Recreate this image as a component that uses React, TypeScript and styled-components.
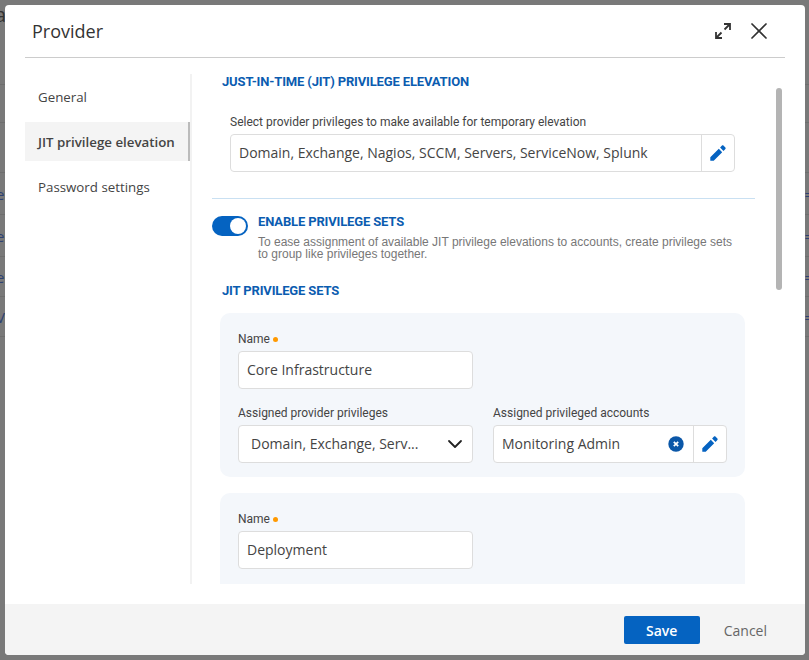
import React from 'react';
import styled, { createGlobalStyle } from 'styled-components';
import { ChevronDown, X } from 'lucide-react';

const GlobalStyle = createGlobalStyle`
	html, body {
		margin: 0;
		padding: 0;
	}
	body {
		width: 809px;
		height: 660px;
		overflow: hidden;
		background: #797979;
		font-family: 'Open Sans', sans-serif;
	}
`;

const PencilIcon = () => (
	<svg width="16" height="16" viewBox="0 0 16 16" fill="#0563c1">
		<path d="M0.3 12.3V15.7H3.7L12.2 7.2L8.8 3.8L0.3 12.3ZM15.4 4C15.8 3.6 15.8 3 15.4 2.6L13.4 0.6C13 0.2 12.4 0.2 12 0.6L10.1 2.5L13.5 5.9L15.4 4Z" />
	</svg>
);

const ExpandIcon = () => (
	<svg width="18" height="18" viewBox="0 0 18 18" fill="none" stroke="#333" strokeWidth="1.8">
		<path d="M10 2H16V8M16 2L10.5 7.5" />
		<path d="M2 10V16H8M2 16L7.5 10.5" />
	</svg>
);

const ClearIcon = () => (
	<svg width="16" height="16" viewBox="0 0 16 16">
		<circle cx="8" cy="8" r="7.7" fill="#0b57a8" />
		<path d="M5.8 5.8L10.2 10.2M10.2 5.8L5.8 10.2" stroke="#fff" strokeWidth="1.7" />
	</svg>
);

const navItems = [
	{ label: 'General', active: false },
	{ label: 'JIT privilege elevation', active: true },
	{ label: 'Password settings', active: false },
];

// the page behind the dialog, only its edges show
const pageRows = [
	{ height: 85, top: 0, left: '', right: '' },
	{ height: 38, top: 0, left: '', right: '' },
	{ height: 50, top: 20, left: '', right: ')' },
	{ height: 42, top: 0, left: 'e', right: '=' },
	{ height: 42, top: 0, left: 'e', right: '=' },
	{ height: 40, top: 0, left: 'e', right: '=' },
	{ height: 40, top: 0, left: 'V', right: '=' },
];

const App = () => {
	return (
		<>
			<GlobalStyle />
			<Backdrop>
				<PageCorner>a</PageCorner>
				{pageRows.map((row, index) => (
					<PageRow key={index} $height={row.height} $top={row.top}>
						<span>{row.left}</span>
						<span>{row.right}</span>
					</PageRow>
				))}
				<Modal>
					<Header>
						<Title>Provider</Title>
						<HeaderActions>
							<ExpandIcon />
							<X size={28} color="#333" strokeWidth={1.5} />
						</HeaderActions>
					</Header>
					<Body>
						<Nav>
							{navItems.map((item) => (
								<NavItem key={item.label} $active={item.active}>
									{item.label}
								</NavItem>
							))}
						</Nav>
						<Content>
							<SectionTitle>JUST-IN-TIME (JIT) PRIVILEGE ELEVATION</SectionTitle>
							<SelectBlock>
								<Label>Select provider privileges to make available for temporary elevation</Label>
								<InputGroup>
									<GroupText>Domain, Exchange, Nagios, SCCM, Servers, ServiceNow, Splunk</GroupText>
									<EditButton>
										<PencilIcon />
									</EditButton>
								</InputGroup>
							</SelectBlock>
							<Divider />
							<ToggleRow>
								<Toggle />
								<div>
									<ToggleTitle>ENABLE PRIVILEGE SETS</ToggleTitle>
									<ToggleHelp>
										To ease assignment of available JIT privilege elevations to accounts, create privilege sets
										to group like privileges together.
									</ToggleHelp>
								</div>
							</ToggleRow>
							<SetsTitle>JIT PRIVILEGE SETS</SetsTitle>
							<SetCard>
								<Label>
									Name<Required />
								</Label>
								<TextInput>Core Infrastructure</TextInput>
								<FieldRow>
									<div>
										<Label>Assigned provider privileges</Label>
										<SelectBox>
											<span>Domain, Exchange, Serv...</span>
											<ChevronDown size={24} color="#222" strokeWidth={1.8} />
										</SelectBox>
									</div>
									<div>
										<Label>Assigned privileged accounts</Label>
										<InputGroup>
											<GroupText>Monitoring Admin</GroupText>
											<ClearSlot>
												<ClearIcon />
											</ClearSlot>
											<EditButton>
												<PencilIcon />
											</EditButton>
										</InputGroup>
									</div>
								</FieldRow>
							</SetCard>
							<SetCard $cut>
								<Label>
									Name<Required />
								</Label>
								<TextInput>Deployment</TextInput>
							</SetCard>
							<ScrollThumb />
						</Content>
					</Body>
					<Footer>
						<SaveButton>Save</SaveButton>
						<CancelButton>Cancel</CancelButton>
					</Footer>
				</Modal>
			</Backdrop>
		</>
	);
};

export default App;

const Backdrop = styled.div`
	position: relative;
	width: 809px;
	height: 660px;
	overflow: hidden;
`;

const PageCorner = styled.div`
	position: absolute;
	top: 2px;
	left: -5px;
	font-size: 20px;
	line-height: 26px;
	color: #333;
`;

const PageRow = styled.div<{ $height: number; $top: number }>`
	height: ${(props) => props.$height}px;
	padding-top: ${(props) => props.$top}px;
	box-sizing: border-box;
	border-bottom: 1px solid #6e6e6e;
	display: flex;
	align-items: center;
	justify-content: space-between;
	margin: 0 -4px;
	font-size: 15px;
	color: #2e4172;
`;

const Modal = styled.div`
	position: absolute;
	top: 5px;
	left: 5px;
	width: 800px;
	height: 650px;
	background: #fff;
	border-radius: 4px;
	display: flex;
	flex-direction: column;
	overflow: hidden;
`;

const Header = styled.header`
	height: 52px;
	margin: 0 20px;
	border-bottom: 1px solid #ccc;
	display: flex;
	align-items: center;
	justify-content: space-between;
	flex-shrink: 0;
`;

const Title = styled.h1`
	margin: 0 0 0 7px;
	font-size: 18px;
	font-weight: 400;
	color: #333;
`;

const HeaderActions = styled.div`
	display: flex;
	align-items: center;
	gap: 13px;
	margin-right: 12px;
`;

const Body = styled.div`
	height: 546px;
	display: flex;
	padding: 0 0 0 20px;
	overflow: hidden;
	flex-shrink: 0;
`;

const Nav = styled.nav`
	width: 165px;
	height: 510px;
	margin-top: 16px;
	border-right: 2px solid #f2f2f2;
	flex-shrink: 0;
`;

const NavItem = styled.div<{ $active: boolean }>`
	height: 39px;
	margin-bottom: 6px;
	padding-left: 13px;
	display: flex;
	align-items: center;
	font-size: 13.3px;
	color: #444;
	font-weight: ${(props) => (props.$active ? 600 : 400)};
	background: ${(props) => (props.$active ? '#f4f4f4' : 'transparent')};
	border-right: ${(props) => (props.$active ? '2px solid #bbb' : '0')};
	&:first-child {
		margin-top: 3px;
	}
`;

const Content = styled.div`
	position: relative;
	width: 590px;
	height: 526px;
	padding-left: 20px;
	box-sizing: border-box;
	overflow: hidden;
`;

const SectionTitle = styled.h2`
	margin: 16px 0 0 10px;
	font-family: 'Roboto', sans-serif;
	font-size: 13px;
	line-height: 16px;
	font-weight: 700;
	letter-spacing: -0.15px;
	color: #0b5cb0;
`;

const SelectBlock = styled.div`
	margin: 24px 0 0 18px;
	width: 505px;
	& > div:first-child {
		margin-bottom: 4px;
	}
`;

const Label = styled.div`
	display: flex;
	align-items: center;
	height: 16px;
	margin-bottom: 5px;
	font-family: 'Roboto', sans-serif;
	font-size: 12px;
	color: #444;
`;

const Required = styled.span`
	width: 5px;
	height: 5px;
	margin-left: 3px;
	border-radius: 50%;
	background: #f90;
`;

const InputGroup = styled.div`
	height: 38px;
	display: flex;
	align-items: center;
	background: #fff;
	border: 1px solid #ddd;
	border-radius: 4px;
	box-sizing: border-box;
`;

const GroupText = styled.div`
	flex: 1;
	padding: 0 0 2px 8px;
	font-size: 14px;
	color: #444;
	white-space: nowrap;
`;

const ClearSlot = styled.div`
	display: flex;
	margin-right: 9px;
`;

const EditButton = styled.div`
	width: 32px;
	height: 100%;
	display: flex;
	align-items: center;
	justify-content: center;
	border-left: 1px solid #ddd;
`;

const Divider = styled.hr`
	width: 543px;
	margin: 26px 0 0 0;
	border: 0;
	border-top: 1px solid #c9e0f2;
`;

const ToggleRow = styled.div`
	display: flex;
	margin-top: 15px;
`;

const Toggle = styled.div`
	position: relative;
	width: 36px;
	height: 20px;
	margin-top: 2px;
	border-radius: 10px;
	background: #0563c1;
	flex-shrink: 0;
	&::after {
		content: '';
		position: absolute;
		top: 2px;
		right: 2px;
		width: 16px;
		height: 16px;
		border-radius: 50%;
		background: #fff;
	}
`;

const ToggleTitle = styled.div`
	margin-left: 10px;
	font-family: 'Roboto', sans-serif;
	font-size: 13px;
	line-height: 16px;
	font-weight: 700;
	letter-spacing: -0.15px;
	color: #0b5cb0;
`;

const ToggleHelp = styled.div`
	margin: 6px 0 0 10px;
	width: 482px;
	font-family: 'Liberation Sans', sans-serif;
	font-size: 12px;
	line-height: 12px;
	color: #777;
`;

const SetsTitle = styled.h3`
	margin: 23px 0 0 10px;
	font-family: 'Roboto', sans-serif;
	font-size: 13px;
	line-height: 16px;
	font-weight: 700;
	letter-spacing: -0.15px;
	color: #0b5cb0;
`;

const SetCard = styled.section<{ $cut?: boolean }>`
	width: 525px;
	margin: 14px 0 0 8px;
	padding: 17px 18px 14px;
	box-sizing: border-box;
	background: #f4f7fb;
	border-radius: 10px;
	height: ${(props) => (props.$cut ? '120px' : '164px')};
	& + & {
		margin-top: 16px;
	}
	${Label} {
		box-sizing: border-box;
		padding-top: 2px;
	}
`;

const TextInput = styled.div`
	width: 235px;
	height: 38px;
	padding: 0 0 2px 8px;
	display: flex;
	align-items: center;
	box-sizing: border-box;
	background: #fff;
	border: 1px solid #ddd;
	border-radius: 4px;
	font-size: 14px;
	color: #444;
`;

const FieldRow = styled.div`
	display: grid;
	grid-template-columns: 235px 234px;
	gap: 20px;
	margin-top: 15px;
`;

const SelectBox = styled.div`
	height: 38px;
	padding: 0 5px 0 12px;
	display: flex;
	align-items: center;
	justify-content: space-between;
	box-sizing: border-box;
	background: #fff;
	border: 1px solid #ddd;
	border-radius: 4px;
	font-size: 14px;
	color: #444;
	span {
		padding-bottom: 2px;
	}
`;

const ScrollThumb = styled.div`
	position: absolute;
	top: 30px;
	right: 0;
	width: 6px;
	height: 202px;
	border-radius: 3px;
	background: #b4b4b4;
`;

const Footer = styled.footer`
	height: 52px;
	background: #f4f4f4;
	display: flex;
	align-items: center;
	justify-content: flex-end;
	padding-right: 28px;
	flex-shrink: 0;
`;

const SaveButton = styled.button`
	width: 76px;
	height: 28px;
	border: 0;
	border-radius: 2px;
	background: #0563c1;
	color: #fff;
	font-family: 'Open Sans', sans-serif;
	font-size: 14px;
	font-weight: 600;
`;

const CancelButton = styled.button`
	margin-left: 14px;
	padding: 0 10px;
	border: 0;
	background: transparent;
	color: #666;
	font-family: 'Open Sans', sans-serif;
	font-size: 14px;
`;
